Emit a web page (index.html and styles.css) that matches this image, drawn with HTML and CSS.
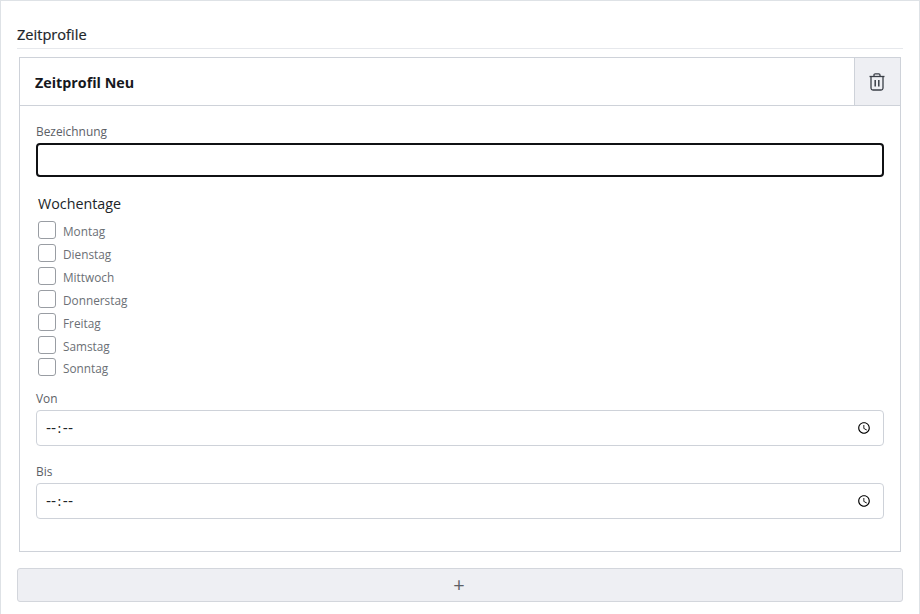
FILE: index.html
```html
<!DOCTYPE html>
<html lang="de">
<head>
  <meta charset="UTF-8">
  <title>Zeitprofile</title>
  <meta name="viewport" content="width=device-width, initial-scale=1.0">
  <link rel="stylesheet" href="styles.css">
</head>
<body>

  <main class="page">
    <h2 class="section-title">Zeitprofile</h2>

    <section class="profile-card">
      <header class="profile-head">
        <h3 class="profile-name">Zeitprofil Neu</h3>
        <button class="delete-btn" type="button" aria-label="Löschen">
          <svg width="16" height="18" viewBox="0 0 16 18" fill="none" stroke="#3a3f47" stroke-width="1.3">
            <path d="M0.5 3.5h15"/>
            <path d="M5 3.5V2a1.2 1.2 0 0 1 1.2-1.2h3.6A1.2 1.2 0 0 1 11 2v1.5"/>
            <path d="M2 3.5v11.7A2 2 0 0 0 4 17h8a2 2 0 0 0 2-1.8V3.5"/>
            <path d="M6.2 7v6.5M9.8 7v6.5" stroke-width="1.5"/>
          </svg>
        </button>
      </header>

      <div class="profile-body">
        <label class="field-label" for="bezeichnung">Bezeichnung</label>
        <input class="text-input" id="bezeichnung" type="text">

        <fieldset class="weekdays">
          <legend class="weekdays-title">Wochentage</legend>
          <label class="day"><input type="checkbox"><span>Montag</span></label>
          <label class="day"><input type="checkbox"><span>Dienstag</span></label>
          <label class="day"><input type="checkbox"><span>Mittwoch</span></label>
          <label class="day"><input type="checkbox"><span>Donnerstag</span></label>
          <label class="day"><input type="checkbox"><span>Freitag</span></label>
          <label class="day"><input type="checkbox"><span>Samstag</span></label>
          <label class="day"><input type="checkbox"><span>Sonntag</span></label>
        </fieldset>

        <label class="field-label" for="von">Von</label>
        <input class="time-input" id="von" type="time">

        <label class="field-label label-bis" for="bis">Bis</label>
        <input class="time-input" id="bis" type="time">
      </div>
    </section>

    <button class="add-btn" type="button">+</button>
  </main>

</body>
</html>
```

FILE: styles.css
```css
* {
  box-sizing: border-box;
}

html,
body {
  height: 100%;
}

body {
  margin: 0;
  font-family: "Open Sans", "Noto Sans", sans-serif;
  font-size: 12px;
  background: white;
  color: #212529;
  overflow: hidden;
}

.page {
  height: 614px;
  padding: 25px 16px 0;
  border: 1px solid #dee2e6;
  border-bottom: none;
}

.section-title {
  margin: 0;
  height: 23px;
  font-size: 14.6px;
  line-height: 17px;
  font-weight: 400;
  color: #212529;
  border-bottom: 1px solid #e6e8ec;
  -webkit-text-stroke: 0.2px #212529;
}

.profile-card {
  margin: 8px 2px 16px;
  height: 495px;
  border: 1px solid #ced2d9;
}

.profile-head {
  display: flex;
  justify-content: space-between;
  height: 48px;
  border-bottom: 1px solid #ced2d9;
}

.profile-name {
  margin: 0;
  padding-left: 15px;
  font-size: 14.3px;
  font-weight: 700;
  line-height: 49px;
  color: #16181d;
}

.delete-btn {
  display: flex;
  align-items: center;
  justify-content: center;
  width: 46px;
  padding: 0 1px 0 0;
  border: none;
  border-left: 1px solid #ced2d9;
  background: #eeeff3;
}

.profile-body {
  padding: 16px 16px 0;
}

.field-label {
  display: block;
  height: 21px;
  font-size: 11.9px;
  line-height: 18px;
  color: #5c6066;
}

.text-input {
  display: block;
  width: 100%;
  height: 34px;
  border: 2px solid #101114;
  border-radius: 4px;
  outline: none;
  background: white;
}

.weekdays {
  margin: 16px 0 0;
  padding: 0 0 0 2px;
  border: none;
}

.weekdays-title {
  display: block;
  padding: 0;
  margin-bottom: 4px;
  font-size: 14.3px;
  line-height: 22px;
  color: #212529;
}

.day {
  display: flex;
  align-items: center;
  gap: 7px;
  height: 22.85px;
  color: #6b6f75;
  font-size: 11.8px;
  line-height: 18px;
}

.day span {
  padding-top: 2px;
}

.day input {
  appearance: none;
  width: 18px;
  height: 18px;
  margin: 0;
  border: 1px solid #999da3;
  border-radius: 3px;
  background: white;
}

.weekdays + .field-label {
  margin-top: 10px;
  height: 21px;
}

.time-input {
  display: block;
  width: 100%;
  height: 36px;
  padding: 0 8px;
  border: 1px solid #ced2d9;
  border-radius: 4px;
  background: white;
  font-family: "DejaVu Sans", sans-serif;
  font-size: 14px;
  color: #212529;
}

.time-input::-webkit-datetime-edit-ampm-field {
  display: none;
}

.label-bis {
  margin-top: 16px;
  height: 21px;
}

.add-btn {
  display: block;
  width: 100%;
  height: 34px;
  padding: 0 2px 0 0;
  border: 1px solid #d3d6dc;
  border-radius: 3px;
  background: #eeeff3;
  font-family: "Open Sans", sans-serif;
  font-size: 20px;
  line-height: 30px;
  color: #5c6066;
}
```
